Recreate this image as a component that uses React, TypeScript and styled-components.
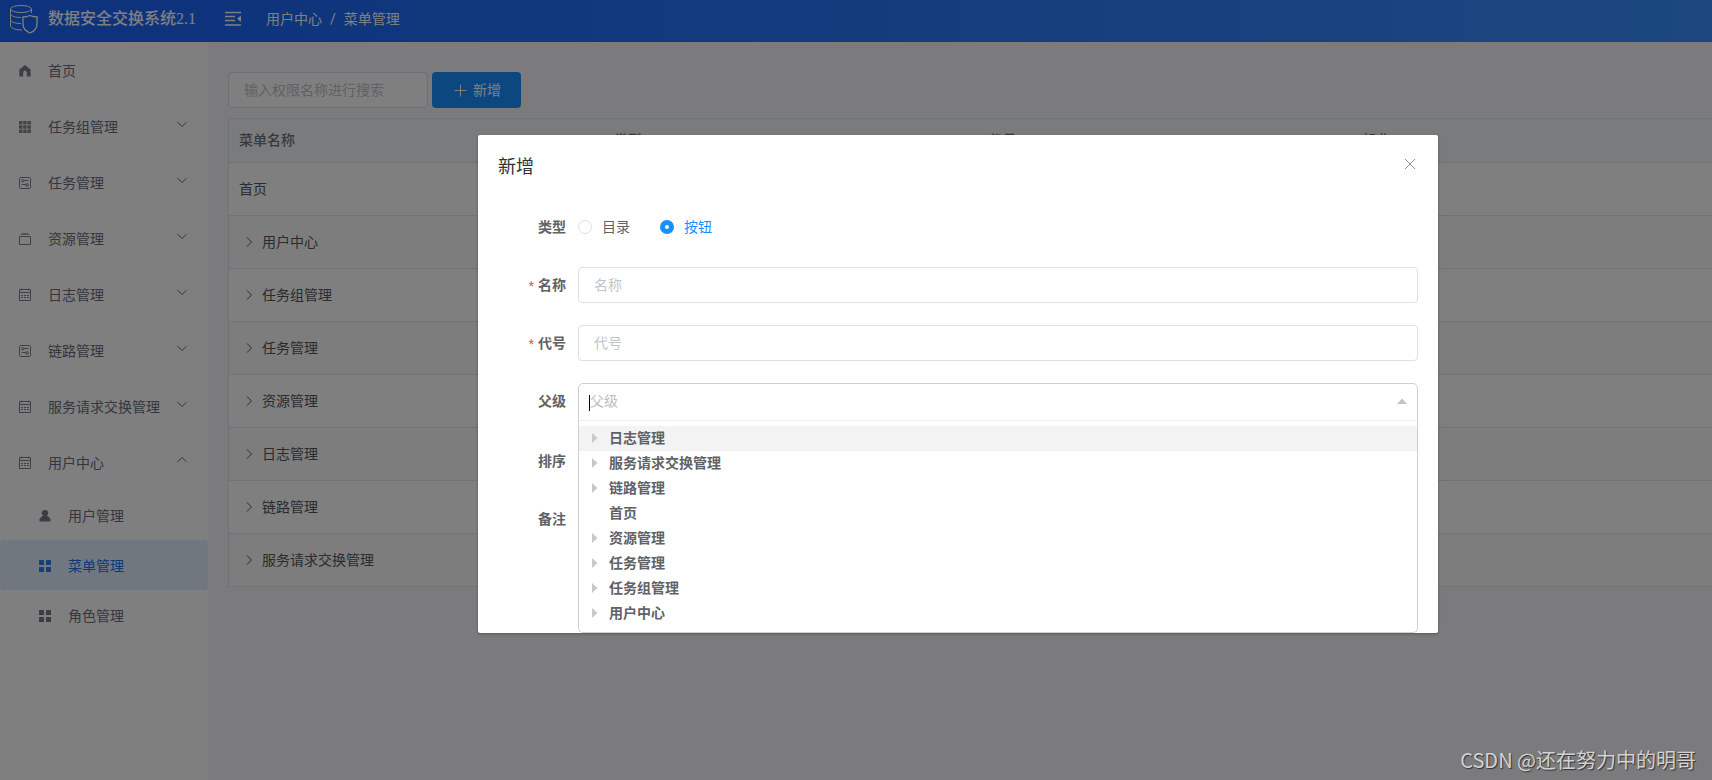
import React from 'react';
import styled, { createGlobalStyle, css } from 'styled-components';

const GlobalStyle = createGlobalStyle`
  *, *::before, *::after { box-sizing: border-box; }
  html, body, #root { height: 100%; }
  body {
    margin: 0;
    overflow: hidden;
    background: #f7f7fa;
    color: #303133;
    font: 14px/20px Roboto, "Noto Sans CJK SC", sans-serif;
  }
  input, button { font: inherit; }
  ul { list-style: none; margin: 0; padding: 0; }
  a { color: inherit; text-decoration: none; }
`;

const Page = styled.div`
  position: relative;
  min-height: 100%;
  display: flex;
  flex-direction: column;
  overflow: hidden;
`;

const Header = styled.header`
  height: 42px;
  flex: none;
  display: flex;
  align-items: center;
  padding: 0 8px 4px;
  background: linear-gradient(90deg, #1c66fa 0%, #1d68f8 15%, #3890ff 100%);
  color: #fff;
`;

const Brand = styled.h1`
  display: flex;
  align-items: center;
  gap: 10px;
  width: 216px;
  margin: 0;
  font: 500 16px/24px "Liberation Serif", "Noto Sans CJK SC", serif;
  white-space: nowrap;
`;

const IconButton = styled.button`
  display: flex;
  padding: 0;
  border: 0;
  background: none;
  color: inherit;
  cursor: pointer;
`;

const Breadcrumb = styled.nav`
  display: flex;
  gap: 8px;
  margin-left: 24px;
`;

const Body = styled.div`
  flex: 1;
  display: flex;
`;

const Sidebar = styled.nav`
  width: 208px;
  flex: none;
  background: #fff;
  color: #606266;
`;

const MenuLink = styled.a<{ $sub?: boolean; $active?: boolean }>`
  display: flex;
  align-items: center;
  height: 56px;
  padding: 2px 20px 0 16px;
  color: #6b6e7c;
  ${p => p.$sub && css`height: 50px; padding-left: 36px;`}
  ${p => p.$active && css`background: #e3eeff; color: #1874f5; border-radius: 4px;`}
`;

const MenuIcon = styled.svg`
  width: 18px;
  height: 18px;
  flex: none;
  margin-right: 14px;
`;

const MenuText = styled.span`
  flex: 1;
  white-space: nowrap;
`;

const Arrow = styled.svg<{ $up?: boolean }>`
  width: 12px;
  height: 12px;
  flex: none;
  margin-bottom: 6px;
  transform: ${p => (p.$up ? 'rotate(180deg)' : 'none')};
`;

const Main = styled.main`
  flex: 1;
  min-width: 0;
  padding: 30px 0 0 20px;
`;

const Toolbar = styled.div`
  display: flex;
  gap: 4px;
  margin-bottom: 10px;
`;

const TextInput = styled.input`
  width: 100%;
  height: 36px;
  padding: 0 15px;
  border: 1px solid #dcdfe6;
  border-radius: 4px;
  background: #fff;
  color: #606266;
  outline: none;
  &::placeholder { color: #c0c4cc; opacity: 1; }
`;

const SearchInput = styled(TextInput)`
  width: 200px;
`;

const AddButton = styled.button`
  display: flex;
  align-items: center;
  gap: 5px;
  height: 36px;
  padding: 0 20px;
  border: 0;
  border-radius: 4px;
  background: #1890ff;
  color: #fff;
`;

const Table = styled.table`
  width: calc(100% + 16px);
  table-layout: fixed;
  border-collapse: separate;
  border-spacing: 0;
  border: 1px solid #dfe6ec;
  border-width: 1px 0 0 1px;
  background: #fff;
`;

const Th = styled.th`
  height: 44px;
  padding: 0 10px 2px;
  border-bottom: 1px solid #dfe6ec;
  background: #f5f7fa;
  color: #70727a;
  font-weight: 500;
  text-align: left;
`;

const Tr = styled.tr`
  &:nth-child(even) { background: #fafafa; }
`;

const Td = styled.td`
  height: 53px;
  padding: 0 10px;
  border-bottom: 1px solid #e2e6ee;
  color: #55575c;
`;

const TreeCell = styled.div`
  display: flex;
  align-items: center;
  gap: 7px;
  padding-left: 4px;
`;

const Overlay = styled.div`
  position: absolute;
  inset: 0;
  padding: 135px 274px 0 478px;
  background: rgba(0, 0, 0, 0.5);
`;

const Dialog = styled.section`
  background: #fff;
  border-radius: 2px;
  box-shadow: 0 1px 3px rgba(0, 0, 0, 0.3);
`;

const DialogHeader = styled.div`
  display: flex;
  justify-content: space-between;
  padding: 20px 20px 10px;
  color: #909399;
`;

const DialogTitle = styled.h2`
  margin: 0;
  color: #303133;
  font-size: 18px;
  font-weight: 400;
  line-height: 24px;
`;

const Form = styled.form`
  display: flex;
  flex-direction: column;
  gap: 22px;
  padding: 20px 20px 96px;
`;

const FormRow = styled.div`
  display: flex;
`;

const Label = styled.label<{ $required?: boolean }>`
  width: 80px;
  height: 36px;
  flex: none;
  padding-right: 12px;
  color: #606266;
  font-weight: 700;
  line-height: 36px;
  text-align: right;
  ${p => p.$required && css`
    &::before { content: '*'; margin-right: 4px; color: #ff4949; font-size: 12px; font-weight: 400; line-height: 20px; }
  `}
`;

const RadioGroup = styled.div`
  display: flex;
  align-items: center;
  gap: 30px;
  height: 36px;
`;

const RadioLabel = styled.label<{ $checked?: boolean }>`
  display: flex;
  align-items: center;
  gap: 10px;
  color: ${p => (p.$checked ? '#1890ff' : '#606266')};
`;

const Radio = styled.input`
  appearance: none;
  width: 14px;
  height: 14px;
  margin: 0;
  border: 1px solid #dcdfe6;
  border-radius: 50%;
  background: #fff;
  &:checked { border: 5px solid #1890ff; }
`;

const TreeSelect = styled.div`
  position: relative;
  flex: 1;
  height: 38px;
  border: 1px solid #cfcfcf;
  border-radius: 5px 5px 0 0;
`;

const SelectControl = styled.div`
  display: flex;
  align-items: center;
  justify-content: space-between;
  height: 34px;
  padding: 0 10px;
`;

const Caret = styled.span`
  width: 1px;
  height: 16px;
  margin-top: 4px;
  background: #000;
`;

const SelectInput = styled.input`
  flex: 1;
  min-width: 0;
  padding: 0;
  border: 0;
  outline: none;
  &::placeholder { color: #bdbdbd; opacity: 1; }
`;

const Options = styled.ul`
  position: absolute;
  z-index: 1;
  top: 36px;
  left: -1px;
  right: -1px;
  padding: 5px 0 6px;
  border: 1px solid #cfcfcf;
  border-top-color: #efefef;
  border-radius: 0 0 5px 5px;
  background: #fff;
`;

const Option = styled.li<{ $active?: boolean }>`
  display: flex;
  align-items: center;
  height: 25px;
  padding: 0 0 1px 13px;
  background: ${p => (p.$active ? '#f3f3f3' : 'transparent')};
  color: #606266;
  font-weight: 700;
`;

const OptionArrow = styled.svg`
  width: 6px;
  height: 10px;
  margin-right: 11px;
`;

const Watermark = styled.span`
  position: absolute;
  right: 16px;
  bottom: 8px;
  color: #d2d2d2;
  font-family: "Noto Sans CJK SC", sans-serif;
  font-size: 20px;
  line-height: 24px;
  text-shadow: 1px 1px 1px rgba(0, 0, 0, 0.6);
`;

type IconName = 'home' | 'grid' | 'sliders' | 'box' | 'calendar' | 'user' | 'squares';

const line = { fill: 'none', stroke: 'currentColor', strokeWidth: 1, opacity: 0.85 };

const icons: Record<IconName, React.ReactNode> = {
  home: <path fill="currentColor" opacity="0.9" d="M9 3 3.4 7.6V14.4H7.2V10.4C7.2 8.2 10.8 8.2 10.8 10.4V14.4H14.6V7.6Z" />,
  grid: <path fill="currentColor" opacity="0.8" d="M3 3h3.500v3.500H3zM7.200 3h3.500v3.500H7.200zM11.400 3h3.500v3.500H11.400zM3 7.200h3.500v3.500H3zM7.200 7.200h3.500v3.500H7.200zM11.400 7.200h3.500v3.500H11.400zM3 11.400h3.500v3.500H3zM7.200 11.400h3.500v3.500H7.200zM11.400 11.400h3.500v3.500H11.400z" />,
  sliders: (
    <g {...line}>
      <rect x="3.500" y="3.500" width="11" height="11" rx="1" />
      <circle cx="6.800" cy="6.800" r="1.200" />
      <path d="M8 6.500H12.500M5.500 10.500H10" />
      <circle cx="11" cy="11" r="1.300" />
    </g>
  ),
  box: (
    <g {...line}>
      <path d="M5.500 3.500H12.500M4.500 4.500H13.500" opacity="0.7" />
      <path d="M3.500 6.500H14.500V14.500H3.500Z" />
    </g>
  ),
  calendar: (
    <g {...line}>
      <path d="M3.500 3.500H14.500V14.500H3.500ZM3.500 6.500H14.500M5.500 2.500V4.500M12.500 2.500V4.500" />
      <path strokeDasharray="2 1" d="M5 9.500H13M5 11.500H13" />
    </g>
  ),
  user: <path fill="currentColor" opacity="0.9" d="M9 3A3 3 0 0 1 10.900 8.500Q13 9.500 14.500 12V14.500H3.500V12Q5 9.500 7.100 8.500A3 3 0 0 1 9 3Z" />,
  squares: (
    <g fill="currentColor" opacity="0.9">
      <rect x="3" y="3" width="5" height="5" rx="0.500" />
      <rect x="10" y="3" width="5" height="5" rx="0.500" />
      <rect x="3" y="10" width="5" height="5" rx="0.500" />
      <rect x="10" y="10" width="5" height="5" rx="0.500" />
    </g>
  ),
};

const menu: { text: string; icon: IconName; arrow?: 'up' | 'down' }[] = [
  { text: '首页', icon: 'home' },
  { text: '任务组管理', icon: 'grid', arrow: 'down' },
  { text: '任务管理', icon: 'sliders', arrow: 'down' },
  { text: '资源管理', icon: 'box', arrow: 'down' },
  { text: '日志管理', icon: 'calendar', arrow: 'down' },
  { text: '链路管理', icon: 'sliders', arrow: 'down' },
  { text: '服务请求交换管理', icon: 'calendar', arrow: 'down' },
  { text: '用户中心', icon: 'calendar', arrow: 'up' },
];

const submenu: { text: string; icon: IconName; active?: boolean }[] = [
  { text: '用户管理', icon: 'user' },
  { text: '菜单管理', icon: 'squares', active: true },
  { text: '角色管理', icon: 'squares' },
];

const rows = ['首页', '用户中心', '任务组管理', '任务管理', '资源管理', '日志管理', '链路管理', '服务请求交换管理'];
const options = ['日志管理', '服务请求交换管理', '链路管理', '首页', '资源管理', '任务管理', '任务组管理', '用户中心'];

const Logo = () => (
  <svg width="30" height="30" viewBox="0 0 30 30" fill="none" stroke="currentColor" strokeWidth="1">
    <ellipse cx="13" cy="5" rx="10.500" ry="3.500" />
    <path d="M2.500 5V10C3 12 7 13.500 13 13.500M2.500 10V16C3 18 7 19.500 13 19.500M2.500 16V22C3 24 7 26 14 26M23.500 5V9" />
    <path strokeWidth="1.300" d="M22 11.500Q18.500 13 15 13V20Q15 26 22 29Q29 26 29 20V13Q25.500 13 22 11.500Z" />
  </svg>
);

export default function App() {
  return (
    <>
      <GlobalStyle />
      <Page>
        <Header>
          <Brand><Logo />数据安全交换系统2.1</Brand>
          <IconButton aria-label="折叠菜单">
            <svg width="18" height="16" viewBox="0 0 18 16" fill="none" stroke="currentColor" strokeWidth="1.400">
              <path d="M1 1.500H17M1 5.500H11M1 9.500H11M1 14H17" />
              <path fill="currentColor" stroke="none" d="M17 4.500V11L13 7.700Z" />
            </svg>
          </IconButton>
          <Breadcrumb>
            <a href="#user">用户中心</a><span>/</span><span>菜单管理</span>
          </Breadcrumb>
        </Header>
        <Body>
          <Sidebar>
            <ul>
              {menu.map(m => (
                <li key={m.text}>
                  <MenuLink href="#">
                    <MenuIcon viewBox="0 0 18 18">{icons[m.icon]}</MenuIcon>
                    <MenuText>{m.text}</MenuText>
                    {m.arrow && (
                      <Arrow $up={m.arrow === 'up'} viewBox="0 0 12 12" fill="none" stroke="currentColor">
                        <path d="M1.500 4 6 8.500 10.500 4" />
                      </Arrow>
                    )}
                  </MenuLink>
                </li>
              ))}
              {submenu.map(m => (
                <li key={m.text}>
                  <MenuLink href="#" $sub $active={m.active}>
                    <MenuIcon viewBox="0 0 18 18">{icons[m.icon]}</MenuIcon>
                    <MenuText>{m.text}</MenuText>
                  </MenuLink>
                </li>
              ))}
            </ul>
          </Sidebar>
          <Main>
            <Toolbar>
              <SearchInput aria-label="权限名称" placeholder="输入权限名称进行搜索" />
              <AddButton>
                <svg width="16" height="16" viewBox="0 0 16 16" stroke="currentColor"><path d="M8.500 2.500V14.500M2.500 8.500H14.500" /></svg>
                新增
              </AddButton>
            </Toolbar>
            <Table>
              <thead>
                <tr><Th>菜单名称</Th><Th>类型</Th><Th>代号</Th><Th>操作</Th></tr>
              </thead>
              <tbody>
                {rows.map((r, i) => (
                  <Tr key={r}>
                    <Td>
                      {i === 0 ? r : (
                        <TreeCell>
                          <svg width="12" height="12" viewBox="0 0 12 12" fill="none" stroke="currentColor"><path d="M4 1.500 8.500 6 4 10.500" /></svg>
                          {r}
                        </TreeCell>
                      )}
                    </Td>
                    <Td /><Td /><Td />
                  </Tr>
                ))}
              </tbody>
            </Table>
          </Main>
        </Body>
        <Overlay>
          <Dialog role="dialog" aria-labelledby="dialog-title">
            <DialogHeader>
              <DialogTitle id="dialog-title">新增</DialogTitle>
              <IconButton aria-label="关闭">
                <svg width="16" height="18" viewBox="0 0 16 18" fill="none" stroke="currentColor"><path d="M3 4 13 14M13 4 3 14" /></svg>
              </IconButton>
            </DialogHeader>
            <Form>
              <FormRow>
                <Label as="span">类型</Label>
                <RadioGroup role="radiogroup" aria-label="类型">
                  <RadioLabel><Radio type="radio" name="kind" />目录</RadioLabel>
                  <RadioLabel $checked><Radio type="radio" name="kind" defaultChecked />按钮</RadioLabel>
                </RadioGroup>
              </FormRow>
              <FormRow>
                <Label htmlFor="name" $required>名称</Label>
                <TextInput id="name" placeholder="名称" />
              </FormRow>
              <FormRow>
                <Label htmlFor="code" $required>代号</Label>
                <TextInput id="code" placeholder="代号" />
              </FormRow>
              <FormRow>
                <Label htmlFor="parent">父级</Label>
                <TreeSelect>
                  <SelectControl>
                    <Caret />
                    <SelectInput id="parent" placeholder="父级" />
                    <svg width="10" height="6" viewBox="0 0 10 6" fill="#c4c4c4"><path d="M0 6 5 0.500 10 6Z" /></svg>
                  </SelectControl>
                  <Options>
                    {options.map((o, i) => (
                      <Option key={o} $active={i === 0}>
                        <OptionArrow viewBox="0 0 6 10">{o !== '首页' && <path fill="#c9c9c9" d="M0 0 5.500 5 0 10Z" />}</OptionArrow>
                        {o}
                      </Option>
                    ))}
                  </Options>
                </TreeSelect>
              </FormRow>
              <FormRow>
                <Label htmlFor="order">排序</Label>
                <TextInput id="order" />
              </FormRow>
              <FormRow>
                <Label htmlFor="remark">备注</Label>
                <TextInput id="remark" />
              </FormRow>
            </Form>
          </Dialog>
        </Overlay>
        <Watermark>CSDN @还在努力中的明哥</Watermark>
      </Page>
    </>
  );
}
